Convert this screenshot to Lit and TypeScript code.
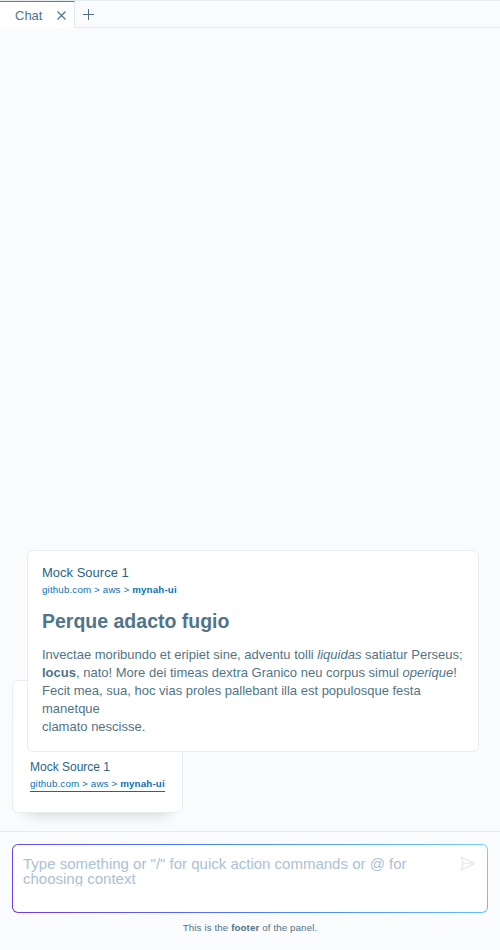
import { LitElement, html, css } from "lit";
import { customElement, property } from "lit/decorators.js";

@customElement("source-link")
class SourceLink extends LitElement {
  @property({ type: Boolean, reflect: true }) hovered = false;

  static styles = css`
    :host { display: block; width: max-content; color: #2a6488; }
    .title { font-size: 13px; line-height: 18px; }
    :host([hovered]) .title { font-size: 12px; }
    .url { font-size: 9.75px; letter-spacing: 0.155px; line-height: 15px; color: #0972b5; border-bottom: 1px solid transparent; }
    :host([hovered]) .url { border-bottom-color: #0a6cb0; }
  `;

  render() {
    return html`
      <div class="title">Mock Source 1</div>
      <div class="url">github.com &gt; aws &gt; <b>mynah-ui</b></div>
    `;
  }
}

@customElement("app-root")
class AppRoot extends LitElement {
  static styles = css`
    :host {
      display: flex; flex-direction: column; height: 950px; overflow: hidden;
      position: relative; background: #fafbfd; color: #517489;
      font-family: "Liberation Sans", Arial, sans-serif; font-size: 13px;
    }
    * { box-sizing: border-box; }
    svg { display: block; fill: none; }
    .tabs { display: flex; height: 28px; flex: none; border-top: 1px solid #e8edf1; }
    .tab {
      width: 75px; height: 27px; padding: 1px 8px 0 15px;
      display: flex; align-items: center; justify-content: space-between;
      background: #fff; border-top: 1px solid #1b96cc; border-right: 1px solid #e2e8ee;
    }
    .rest { flex: 1; border-bottom: 1px solid #e2e8ee; padding: 7px 0 0 7px; }
    .chat { flex: 1; display: flex; flex-direction: column; justify-content: flex-end; padding: 0 12px 18px; }
    .card {
      width: 171px; height: 133px; padding: 0 17px 20px; display: flex; align-items: flex-end;
      background: #fff; border: 1px solid #e8edf2; border-radius: 6px;
      box-shadow: 0 15px 15px -15px rgba(0, 0, 0, 0.2);
    }
    .preview {
      position: absolute; left: 27px; top: 550px; width: 452px; height: 202px;
      padding: 13px 14px; background: #fff; border: 1px solid #e8edf2; border-radius: 6px;
    }
    h1 { margin: 11px 0 13px; font-size: 19.5px; line-height: 24px; }
    p { margin: 0; line-height: 18px; }
    .prompt { height: 119px; flex: none; border-top: 1px solid #e6e9ed; padding: 12px 12px 0; }
    .field {
      height: 69px; padding: 11px 11px 0 10px; display: flex; justify-content: space-between;
      border: 1px solid transparent; border-radius: 6px;
      background:
        linear-gradient(#fff, #fff) padding-box,
        linear-gradient(45deg, #7138ee, #4885f7 50%, #73d0fa) border-box;
    }
    .placeholder { width: 400px; height: 30px; overflow: hidden; font-size: 15px; line-height: 15px; color: #abc1d4; }
    .footer { margin-top: 9px; text-align: center; font-size: 9.75px; letter-spacing: 0.105px; line-height: 12px; }
  `;

  render() {
    return html`
      <div class="tabs">
        <div class="tab">
          <span>Chat</span>
          <svg width="10" height="10" viewBox="0 0 10 10" stroke="#4f7086" stroke-width="1.1"><path d="M1.5 0.5L9.5 8.5M9.5 0.5L1.5 8.5" /></svg>
        </div>
        <div class="rest">
          <svg width="13" height="13" viewBox="0 0 13 13" stroke="#4f7086"><path d="M6.5 1V12M1 6.5H12" /></svg>
        </div>
      </div>
      <div class="chat">
        <div class="card"><source-link hovered></source-link></div>
      </div>
      <div class="prompt">
        <div class="field">
          <div class="placeholder">Type something or "/" for quick action commands or @ for choosing context</div>
          <svg width="16" height="16" viewBox="0 0 16 16" stroke="#e8eef2" stroke-width="1.7" stroke-linejoin="round"><path d="M1.5 1.2L14.8 7.5L1.5 14L3.2 7.5ZM3.2 7.5H14" /></svg>
        </div>
        <div class="footer">This is the <b>footer</b> of the panel.</div>
      </div>
      <div class="preview">
        <source-link></source-link>
        <h1>Perque adacto fugio</h1>
        <p>
          Invectae moribundo et eripiet sine, adventu tolli <em>liquidas</em> satiatur Perseus;
          <b>locus</b>, nato! More dei timeas dextra Granico neu corpus simul <em>operique</em>!
          Fecit mea, sua, hoc vias proles pallebant illa est populosque festa manetque<br />clamato nescisse.
        </p>
      </div>
    `;
  }
}
